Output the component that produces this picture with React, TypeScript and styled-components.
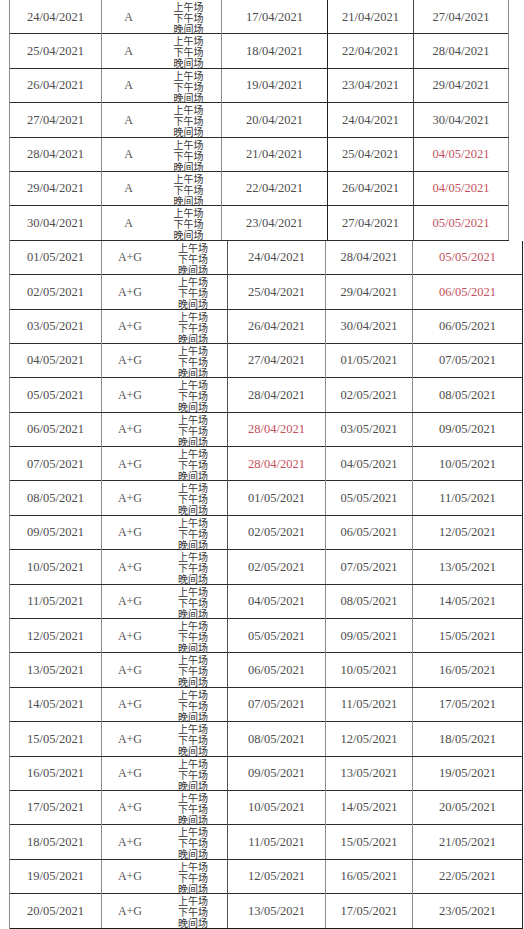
import React from "react";
import styled, { createGlobalStyle } from "styled-components";

const GlobalStyle = createGlobalStyle`
  html, body {
    margin: 0;
    padding: 0;
    background: #ffffff;
  }
  * {
    box-sizing: border-box;
  }
`;

const Page = styled.div`
  width: 524px;
  height: 929px;
  overflow: hidden;
  padding-left: 9px;
  background: #ffffff;
`;

const Table = styled.div<{ width: number }>`
  width: ${(props) => props.width}px;
  border-left: 1px solid #8c8c8c;
`;

const Row = styled.div<{ cols: string; last?: boolean }>`
  display: grid;
  grid-template-columns: ${(props) => props.cols};
  height: 34.4px;
  border-bottom: 1px solid ${(props) => (props.last ? "#1a1a1a" : "#2b2b2b")};
`;

const Cell = styled.div<{ line?: string }>`
  display: flex;
  align-items: center;
  justify-content: center;
  border-right: 1px solid ${(props) => props.line || "#8c8c8c"};
  overflow: visible;
`;

const DateText = styled.span<{ red?: boolean }>`
  font-family: "Liberation Serif", "Times New Roman", serif;
  font-size: 12.5px;
  color: ${(props) => (props.red ? "#c4505c" : "#4d4d4d")};
  white-space: nowrap;
`;

const PlanText = styled.span`
  font-family: "Liberation Serif", "Times New Roman", serif;
  font-size: 12px;
  color: #555555;
`;

const Sessions = styled.div`
  font-family: "Noto Sans CJK SC", "Noto Sans", sans-serif;
  font-size: 10px;
  line-height: 11px;
  text-align: center;
  color: #333333;
  margin-top: 1px;
`;

type Day = {
  date: string;
  a: string;
  b: string;
  c: string;
  red?: ("a" | "b" | "c")[];
};

const topRows: Day[] = [
  { date: "24/04/2021", a: "17/04/2021", b: "21/04/2021", c: "27/04/2021" },
  { date: "25/04/2021", a: "18/04/2021", b: "22/04/2021", c: "28/04/2021" },
  { date: "26/04/2021", a: "19/04/2021", b: "23/04/2021", c: "29/04/2021" },
  { date: "27/04/2021", a: "20/04/2021", b: "24/04/2021", c: "30/04/2021" },
  { date: "28/04/2021", a: "21/04/2021", b: "25/04/2021", c: "04/05/2021", red: ["c"] },
  { date: "29/04/2021", a: "22/04/2021", b: "26/04/2021", c: "04/05/2021", red: ["c"] },
  { date: "30/04/2021", a: "23/04/2021", b: "27/04/2021", c: "05/05/2021", red: ["c"] },
];

const bottomRows: Day[] = [
  { date: "01/05/2021", a: "24/04/2021", b: "28/04/2021", c: "05/05/2021", red: ["c"] },
  { date: "02/05/2021", a: "25/04/2021", b: "29/04/2021", c: "06/05/2021", red: ["c"] },
  { date: "03/05/2021", a: "26/04/2021", b: "30/04/2021", c: "06/05/2021" },
  { date: "04/05/2021", a: "27/04/2021", b: "01/05/2021", c: "07/05/2021" },
  { date: "05/05/2021", a: "28/04/2021", b: "02/05/2021", c: "08/05/2021" },
  { date: "06/05/2021", a: "28/04/2021", b: "03/05/2021", c: "09/05/2021", red: ["a"] },
  { date: "07/05/2021", a: "28/04/2021", b: "04/05/2021", c: "10/05/2021", red: ["a"] },
  { date: "08/05/2021", a: "01/05/2021", b: "05/05/2021", c: "11/05/2021" },
  { date: "09/05/2021", a: "02/05/2021", b: "06/05/2021", c: "12/05/2021" },
  { date: "10/05/2021", a: "02/05/2021", b: "07/05/2021", c: "13/05/2021" },
  { date: "11/05/2021", a: "04/05/2021", b: "08/05/2021", c: "14/05/2021" },
  { date: "12/05/2021", a: "05/05/2021", b: "09/05/2021", c: "15/05/2021" },
  { date: "13/05/2021", a: "06/05/2021", b: "10/05/2021", c: "16/05/2021" },
  { date: "14/05/2021", a: "07/05/2021", b: "11/05/2021", c: "17/05/2021" },
  { date: "15/05/2021", a: "08/05/2021", b: "12/05/2021", c: "18/05/2021" },
  { date: "16/05/2021", a: "09/05/2021", b: "13/05/2021", c: "19/05/2021" },
  { date: "17/05/2021", a: "10/05/2021", b: "14/05/2021", c: "20/05/2021" },
  { date: "18/05/2021", a: "11/05/2021", b: "15/05/2021", c: "21/05/2021" },
  { date: "19/05/2021", a: "12/05/2021", b: "16/05/2021", c: "22/05/2021" },
  { date: "20/05/2021", a: "13/05/2021", b: "17/05/2021", c: "23/05/2021" },
];

type Section = {
  plan: string;
  cols: string;
  width: number;
  lines: string[];
  rows: Day[];
};

const sections: Section[] = [
  {
    plan: "A",
    cols: "92px 54px 66px 106px 86px 95px",
    width: 500,
    lines: ["#8c8c8c", "transparent", "#8c8c8c", "#222222", "#444444", "#8c8c8c"],
    rows: topRows,
  },
  {
    plan: "A+G",
    cols: "92px 57px 69px 98px 87px 110px",
    width: 514,
    lines: ["#8c8c8c", "transparent", "#555555", "#8c8c8c", "#8c8c8c", "#222222"],
    rows: bottomRows,
  },
];

function App(): JSX.Element {
  return (
    <Page>
      <GlobalStyle />
      {sections.map((section, s) => (
        <Table key={s} width={section.width}>
          {section.rows.map((row, i) => (
            <Row
              key={row.date}
              cols={section.cols}
              last={s === sections.length - 1 && i === section.rows.length - 1}
            >
              <Cell line={section.lines[0]}>
                <DateText>{row.date}</DateText>
              </Cell>
              <Cell line={section.lines[1]}>
                <PlanText>{section.plan}</PlanText>
              </Cell>
              <Cell line={section.lines[2]}>
                <Sessions>
                  上午场
                  <br />
                  下午场
                  <br />
                  晚间场
                </Sessions>
              </Cell>
              <Cell line={section.lines[3]}>
                <DateText red={row.red?.includes("a")}>{row.a}</DateText>
              </Cell>
              <Cell line={section.lines[4]}>
                <DateText red={row.red?.includes("b")}>{row.b}</DateText>
              </Cell>
              <Cell line={section.lines[5]}>
                <DateText red={row.red?.includes("c")}>{row.c}</DateText>
              </Cell>
            </Row>
          ))}
        </Table>
      ))}
    </Page>
  );
}

export default App;
